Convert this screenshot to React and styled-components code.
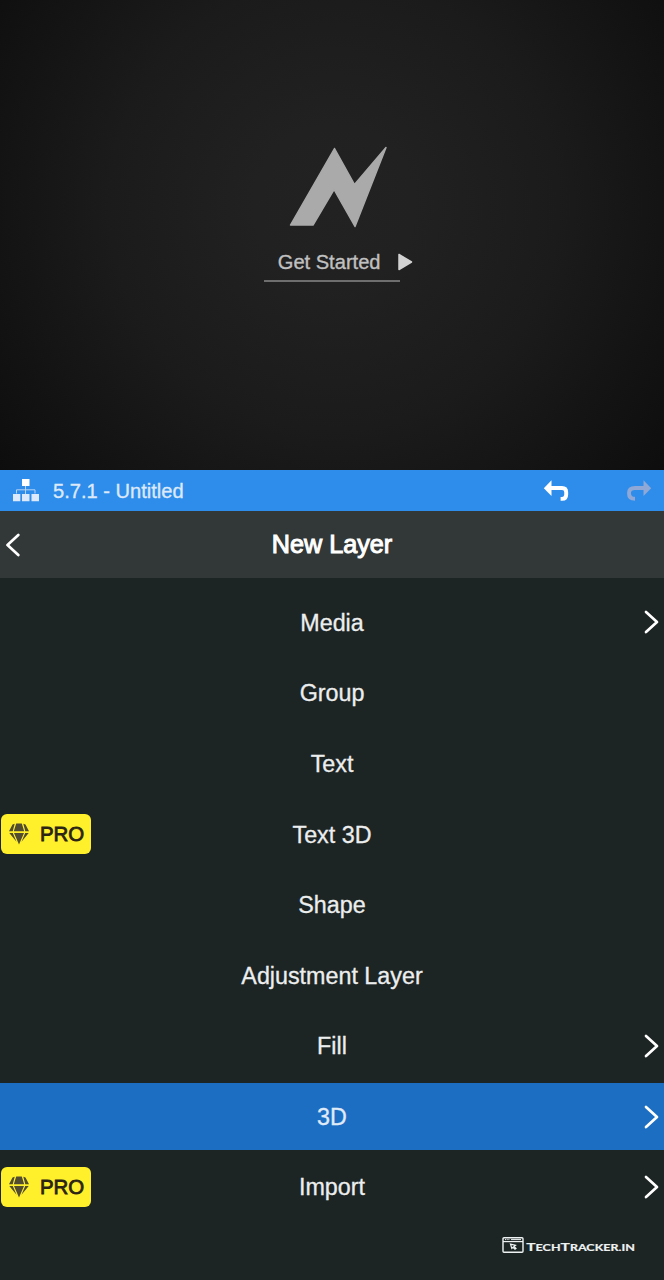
import React from 'react';
import styled, { createGlobalStyle } from 'styled-components';

const GlobalStyle = createGlobalStyle`
  *, *::before, *::after { box-sizing: border-box; }
  html, body { margin: 0; padding: 0; background: #1d2424; }
  body { font-family: "Liberation Sans", Arial, sans-serif; }
  svg { display: block; flex: none; }
`;

const Screen = styled.main`
  position: relative;
  display: flex;
  flex-direction: column;
  width: 664px;
  height: 1280px;
  overflow: hidden;
  background: #1d2424;
`;

const Preview = styled.section`
  display: flex;
  flex-direction: column;
  align-items: center;
  height: 470px;
  padding-top: 144px;
  background: radial-gradient(circle at 334px 205px, #222222 0, #212121 80px, #1b1b1b 225px, #131313 340px, #0d0d0d 430px);
`;

const Logo = styled.svg`
  width: 100px;
  height: 86px;
  margin-left: 14px;
`;

const StartButton = styled.button`
  display: flex;
  align-items: center;
  width: 136.5px;
  height: 52px;
  padding: 13px 0 0 14px;
  border: 0;
  border-bottom: 2px solid #6e6e6e;
  background: none;
  color: #c0c0c0;
  font: 20.1px/24px "Liberation Sans", Arial, sans-serif;
  white-space: nowrap;
  -webkit-text-stroke: 0.35px currentColor;

  svg { margin-left: 16px; }
`;

const ProjectBar = styled.header`
  display: flex;
  align-items: center;
  height: 41px;
  padding: 0 12px;
  background: #2e8deb;
  color: #dde9fa;
`;

const ProjectName = styled.span`
  flex: 1;
  margin-left: 14px;
  padding-top: 1px;
  font-size: 20.1px;
  line-height: 24px;
  -webkit-text-stroke: 0.35px currentColor;
`;

const HistoryActions = styled.div`
  display: flex;
  gap: 57px;
`;

const PanelHeader = styled.div`
  display: grid;
  grid-template-columns: 60px 1fr 60px;
  align-items: center;
  height: 66.5px;
  background: #323737;
  color: #fff;
`;

const BackButton = styled.span`
  padding: 1px 0 0 5px;
`;

const PanelTitle = styled.h1`
  margin: 0;
  font-size: 25.2px;
  font-weight: 400;
  line-height: 30px;
  text-align: center;
  -webkit-text-stroke: 1px currentColor;
`;

const LayerList = styled.ul`
  display: flex;
  flex-direction: column;
  gap: 4.1px;
  margin: 0;
  padding: 11.7px 0 0;
  list-style: none;
`;

const LayerRow = styled.li`
  display: grid;
  grid-template-columns: 100px 1fr 100px;
  align-items: center;
  height: 66.5px;
  background: ${({ $selected }) => ($selected ? '#1c6ec3' : 'transparent')};
  color: ${({ $selected }) => ($selected ? '#e0ebf8' : '#eceeee')};
`;

const LayerName = styled.span`
  grid-column: 2;
  padding-top: 0.6px;
  font-size: 23.3px;
  line-height: 28px;
  text-align: center;
  -webkit-text-stroke: 0.3px currentColor;
`;

const Trailing = styled.span`
  grid-column: 3;
  justify-self: end;
  padding-right: 5px;
  color: #fff;
`;

const ProBadge = styled.span`
  display: flex;
  align-items: center;
  gap: 10px;
  width: 90px;
  height: 40px;
  margin-left: 1px;
  padding-left: 7px;
  border-radius: 6px;
  background: #fff02b;
  color: #2b2415;
  font-size: 20.4px;
  line-height: 24px;
  -webkit-text-stroke: 0.8px currentColor;
`;

const Watermark = styled.div`
  position: absolute;
  right: 28px;
  bottom: 25px;
  color: #eef2f2;
`;

function Chevron({ back }) {
  return (
    <svg width="15" height="26" viewBox="0 0 15 26" fill="none" stroke="currentColor" strokeWidth="2.7" strokeLinecap="round" strokeLinejoin="round">
      <path d={back ? 'M13.3 3 2.5 13l10.8 10' : 'M2 3l11 10L2 23'} />
    </svg>
  );
}

function HierarchyIcon() {
  return (
    <svg width="27" height="24" viewBox="0 0 27 24">
      <path d="M13.5 7v8M4.5 14.5v-3.7h18.5v3.7" fill="none" stroke="#b4d2f6" strokeWidth="1" />
      <path d="M10 0h7.5v7H10z" fill="#fff" />
      <path d="M1 15h7.3v7.2H1zM10 15h7.5v7.2H10zM19.5 15H27v7.2h-7.5z" fill="#dce8fb" />
    </svg>
  );
}

function UndoIcon({ redo }) {
  return (
    <svg width="26" height="24" viewBox="0 0 26 24" color={redo ? '#8fa8d6' : '#fff'}>
      <g transform={redo ? 'matrix(-1 0 0 1 26 0)' : undefined}>
        <path d="M.8 9.2 8.5 1.3v15.8z" fill="currentColor" />
        <path
          d={redo ? 'M8 9h9q6 0 6 5.2 0 5.6-6 5.6' : 'M8 9h11q4.2 0 4.2 4.3v2.2q0 4.4-4 4.4h-1.6'}
          fill="none"
          stroke="currentColor"
          strokeWidth="3.9"
        />
      </g>
    </svg>
  );
}

function DiamondIcon() {
  return (
    <svg width="22" height="22" viewBox="0 0 22 22" fill="#514b32">
      <path d="M4.5 1.5 6.7.7 4.7 8.2H1zM8.2.5h5.6l2.4 7.7H5.8zM15.3.7l2.2.8 3.5 6.7h-3.7zM1.3 10h3.5l3.7 8.7zM6 10h10L11 21.5zM17.2 10h3.5l-7.2 8.7z" />
    </svg>
  );
}

function TrackerLogo() {
  return (
    <svg width="134" height="18" viewBox="0 0 134 18">
      <g fill="none" stroke="currentColor">
        <rect x="1" y=".7" width="20" height="14.6" rx="1" strokeWidth="1.4" />
        <path d="M1 4.6h20" strokeWidth="1.2" />
        <path d="M9 2.6h10" strokeWidth="1" />
        <path d="M3 2.6h5" strokeWidth="1" strokeDasharray="1 .7" />
        <path d="m8.5 7.2 5 1.2-1.5 1.1 2 2-1 .8-2-2-1.2 1.1z" strokeWidth="1.2" />
      </g>
      <text x="24.3" y="14.3" fill="currentColor" stroke="currentColor" strokeWidth=".2" fontFamily="Lato, sans-serif" fontWeight="700" fontSize="9.8" textLength="108.5" lengthAdjust="spacingAndGlyphs">
        <tspan fontSize="12.2">T</tspan>ECH<tspan fontSize="12.2">T</tspan>RACKER.IN
      </text>
    </svg>
  );
}

const layers = [
  { name: 'Media', nested: true },
  { name: 'Group' },
  { name: 'Text' },
  { name: 'Text 3D', pro: true },
  { name: 'Shape' },
  { name: 'Adjustment Layer' },
  { name: 'Fill', nested: true },
  { name: '3D', nested: true, selected: true },
  { name: 'Import', nested: true, pro: true },
];

export default function App() {
  return (
    <>
      <GlobalStyle />
      <Screen>
        <Preview>
          <Logo viewBox="0 0 100 86">
            <path d="M1.5 81 45.5 4.5l20 36L97 3.5 66 82.5 45 45.5 24 81z" fill="#aaa" stroke="#aaa" strokeWidth="1.5" strokeLinejoin="round" />
          </Logo>
          <StartButton>
            Get Started
            <svg width="16" height="18" viewBox="0 0 16 18">
              <path d="M2 1.5v15L14.5 9z" fill="#d2d2d2" stroke="#d2d2d2" strokeWidth="1.5" strokeLinejoin="round" />
            </svg>
          </StartButton>
        </Preview>
        <ProjectBar>
          <HierarchyIcon />
          <ProjectName>5.7.1 - Untitled</ProjectName>
          <HistoryActions>
            <UndoIcon />
            <UndoIcon redo />
          </HistoryActions>
        </ProjectBar>
        <PanelHeader>
          <BackButton><Chevron back /></BackButton>
          <PanelTitle>New Layer</PanelTitle>
        </PanelHeader>
        <LayerList>
          {layers.map((layer) => (
            <LayerRow key={layer.name} $selected={layer.selected}>
              {layer.pro && <ProBadge><DiamondIcon />PRO</ProBadge>}
              <LayerName>{layer.name}</LayerName>
              {layer.nested && <Trailing><Chevron /></Trailing>}
            </LayerRow>
          ))}
        </LayerList>
        <Watermark><TrackerLogo /></Watermark>
      </Screen>
    </>
  );
}
